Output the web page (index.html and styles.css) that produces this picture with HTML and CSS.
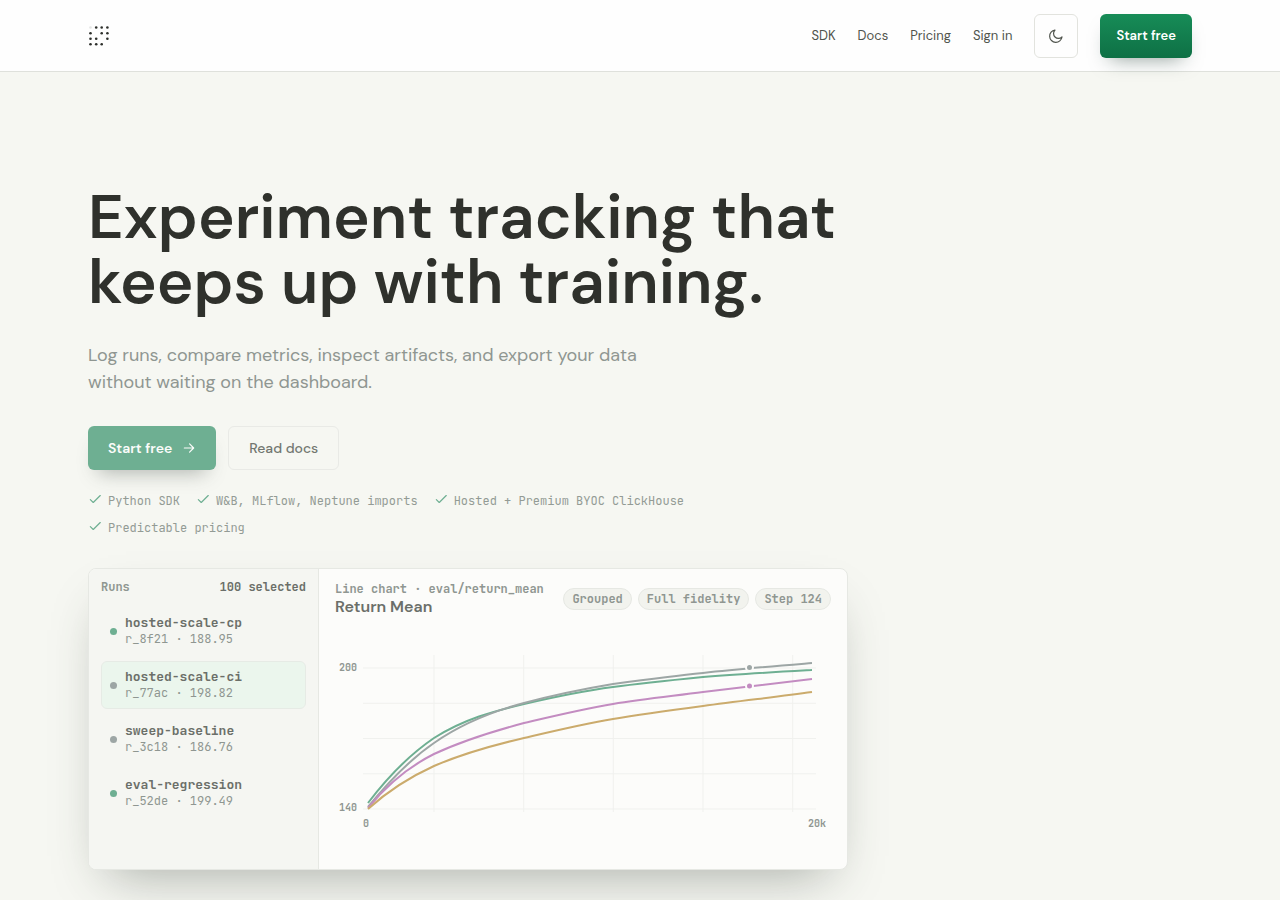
FILE: index.html
```html
<!DOCTYPE html>
<html lang="en">
<head>
  <meta charset="UTF-8" />
  <meta name="viewport" content="width=device-width, initial-scale=1" />
  <title>Experiment tracking that keeps up with training</title>
  <link rel="stylesheet" href="styles.css">
</head>
<body>
  <header class="site-header">
    <div class="container header-inner">
      <a class="logo" href="#" aria-label="Home">
        <svg width="22" height="22" viewBox="0 0 22 22" fill="#2d2f2b">
          <circle cx="2.5" cy="2.5" r="1.3" opacity="0.12" />
          <circle cx="8.2" cy="2.5" r="1.3" /><circle cx="13.7" cy="2.5" r="1.3" /><circle cx="19.4" cy="2.5" r="1.3" />
          <circle cx="2.5" cy="8.2" r="1.3" /><circle cx="13.7" cy="8.2" r="1.3" /><circle cx="19.4" cy="8.2" r="1.3" />
          <circle cx="2.5" cy="13.7" r="1.3" /><circle cx="8.2" cy="13.7" r="1.3" /><circle cx="19.4" cy="13.7" r="1.3" />
          <circle cx="2.5" cy="19.2" r="1.3" /><circle cx="8.2" cy="19.2" r="1.3" /><circle cx="13.7" cy="19.2" r="1.3" />
        </svg>
      </a>
      <nav class="nav" aria-label="Main">
        <a href="#">SDK</a>
        <a href="#">Docs</a>
        <a href="#">Pricing</a>
        <a href="#">Sign in</a>
        <button class="theme-toggle" type="button" aria-label="Toggle theme">
          <svg width="16" height="16" viewBox="0 0 24 24" fill="none" stroke="currentColor" stroke-width="1.8" stroke-linecap="round" stroke-linejoin="round"><path d="M10.5 3a7 7 0 0 0 10.5 10.5A9.3 9.3 0 1 1 10.5 3Z" /></svg>
        </button>
        <a class="btn btn-nav" href="#">Start free</a>
      </nav>
    </div>
  </header>

  <main class="container">
    <section class="hero">
      <h1>Experiment tracking that keeps up with training.</h1>
      <p class="lead">Log runs, compare metrics, inspect artifacts, and export your data without waiting on the dashboard.</p>

      <div class="actions">
        <a class="btn btn-primary" href="#">Start free
          <svg width="14" height="14" viewBox="0 0 24 24" fill="none" stroke="currentColor" stroke-width="2" stroke-linecap="round" stroke-linejoin="round"><path d="M4 12h16M13 5l7 7-7 7" /></svg>
        </a>
        <a class="btn btn-outline" href="#">Read docs</a>
      </div>

      <ul class="features">
        <li><svg viewBox="0 0 24 24"><path d="M21 6 9 18l-5-5" /></svg>Python SDK</li>
        <li><svg viewBox="0 0 24 24"><path d="M21 6 9 18l-5-5" /></svg>W&amp;B, MLflow, Neptune imports</li>
        <li><svg viewBox="0 0 24 24"><path d="M21 6 9 18l-5-5" /></svg>Hosted + Premium BYOC ClickHouse</li>
        <li><svg viewBox="0 0 24 24"><path d="M21 6 9 18l-5-5" /></svg>Predictable pricing</li>
      </ul>

      <div class="preview">
        <aside class="runs">
          <div class="runs-head"><span>Runs</span><strong>100 selected</strong></div>
          <ul class="run-list">
            <li class="run"><span class="dot dot-green"></span><div><b>hosted-scale-cp</b><small>r_8f21 · 188.95</small></div></li>
            <li class="run active"><span class="dot"></span><div><b>hosted-scale-ci</b><small>r_77ac · 198.82</small></div></li>
            <li class="run"><span class="dot"></span><div><b>sweep-baseline</b><small>r_3c18 · 186.76</small></div></li>
            <li class="run"><span class="dot dot-green"></span><div><b>eval-regression</b><small>r_52de · 199.49</small></div></li>
          </ul>
        </aside>

        <div class="panel">
          <div class="panel-head">
            <div>
              <p class="panel-kicker">Line chart · eval/return_mean</p>
              <h2>Return Mean</h2>
            </div>
            <div class="tags">
              <span>Grouped</span>
              <span>Full fidelity</span>
              <span>Step 124</span>
            </div>
          </div>
          <svg class="chart" viewBox="0 0 496 200" role="img" aria-label="Return mean by step">
            <path class="grid" d="M28 28H481M28 63.3H481M28 98.5H481M28 133.8H481M28 169H481M99 15V172M188.7 15V172M278.3 15V172M368 15V172M457.7 15V172" />
            <!-- series -->
            <path class="line green" d="M33 163C55 134 77 113 99 98C129 79 159 71 189 64C219 57 248 51 278 47C308 43 338 40 368 37C404 34 441 32 477 30" />
            <path class="line gray" d="M33 167C55 140 77 118 99 103C129 82 159 71 189 63C219 55 248 49 278 44C308 40 338 36 368 33C404 29 441 26 477 23" />
            <path class="line pink" d="M33 168C55 141 77 125 99 114C129 100 159 91 189 83C219 76 248 69 278 64C308 59 338 56 368 52C404 48 441 43 477 39" />
            <path class="line orange" d="M33 169C55 149 77 136 99 126C129 113 159 105 189 98C219 91 248 84 278 79C308 74 338 70 368 66C404 61 441 57 477 52" />
            <circle class="point" cx="414.5" cy="27.5" r="3.5" fill="#9da6a5" />
            <circle class="point" cx="414.5" cy="46" r="3.5" fill="#c38cc1" />
            <text x="4" y="31">200</text>
            <text x="4" y="171">140</text>
            <text x="28" y="187">0</text>
            <text x="473" y="187">20k</text>
          </svg>
        </div>
      </div>
    </section>
  </main>
</body>
</html>
```
FILE: styles.css
```css
* {
  box-sizing: border-box;
}

body {
  margin: 0;
  background: #f6f7f2;
  color: #2f312c;
  font-family: "DM Sans", Inter, sans-serif;
}

h1, h2, p, ul {
  margin: 0;
  padding: 0;
}

ul {
  list-style: none;
}

a {
  color: inherit;
  text-decoration: none;
}

svg {
  display: block;
}

.container {
  max-width: 1152px;
  margin: 0 auto;
  padding: 0 24px;
}

/* Header */
.site-header {
  background: #fefefe;
  border-bottom: 1px solid #dfe1dc;
}

.header-inner {
  display: flex;
  align-items: center;
  justify-content: space-between;
  height: 71px;
}

.nav {
  display: flex;
  align-items: center;
  gap: 22px;
  font-size: 13px;
  color: #50544d;
}

.theme-toggle {
  display: grid;
  place-items: center;
  width: 44px;
  height: 44px;
  padding: 0;
  border: 1px solid #e2e3de;
  border-radius: 6px;
  background: #fefefe;
  color: #50544d;
  cursor: pointer;
}

.btn {
  display: inline-flex;
  align-items: center;
  justify-content: center;
  gap: 10px;
  height: 44px;
  padding: 0 20px;
  border-radius: 6px;
  font-size: 14px;
  font-weight: 600;
}

.btn-nav {
  padding: 0 16px;
  font-size: 13px;
  color: #fff;
  background: linear-gradient(#178c57, #0e7045);
  box-shadow: 0 10px 20px -10px rgba(20, 50, 40, 0.5);
}

/* Hero */
.hero {
  max-width: 760px;
  padding: 112px 0 64px;
}

h1 {
  font-size: 62px;
  line-height: 65px;
  font-weight: 600;
}

.lead {
  max-width: 580px;
  margin-top: 28px;
  font-size: 18px;
  line-height: 27px;
  color: #8f9691;
}

.actions {
  display: flex;
  gap: 12px;
  margin-top: 30px;
}

.btn-primary {
  color: #fbfcfa;
  background: #6eaf92;
  box-shadow: 0 12px 20px -10px rgba(60, 70, 65, 0.4);
}

.btn-outline {
  border: 1px solid #e9eae6;
  font-weight: 500;
  color: #737771;
}

.features {
  display: flex;
  flex-wrap: wrap;
  gap: 9px 16px;
  margin-top: 22px;
  font-family: "JetBrains Mono", "Liberation Mono", monospace;
  font-size: 12px;
  line-height: 18px;
  color: #939b95;
}

.features li {
  display: flex;
  gap: 6px;
}

.features svg {
  width: 14px;
  height: 14px;
  fill: none;
  stroke: #6eaf92;
  stroke-width: 2;
  stroke-linecap: round;
  stroke-linejoin: round;
}

/* Product preview */
.preview {
  display: grid;
  grid-template-columns: 230px 1fr;
  min-height: 302px;
  margin-top: 31px;
  border: 1px solid #e6e8e3;
  border-radius: 8px;
  overflow: hidden;
  background: #fcfcfa;
  box-shadow: 0 24px 50px -20px rgba(50, 60, 50, 0.4);
  font-family: "JetBrains Mono", "Liberation Mono", monospace;
  font-size: 12px;
  line-height: 16px;
  color: #8f9691;
}

.runs {
  padding: 10px 12px;
  border-right: 1px solid #e6e8e3;
  background: #f5f6f2;
}

.runs-head {
  display: flex;
  justify-content: space-between;
  font-weight: 700;
}

.runs-head strong,
.run b {
  color: #6b6f69;
}

.runs-head strong {
  font-weight: 700;
}

.run-list {
  display: grid;
  gap: 6px;
  margin-top: 12px;
}

.run {
  display: flex;
  align-items: center;
  gap: 8px;
  height: 48px;
  padding: 0 8px;
  border: 1px solid transparent;
  border-radius: 6px;
}

.run.active {
  border-color: #e6ebe5;
  background: #ebf6ed;
}

.run b,
.run small {
  display: block;
}

.run b {
  font-size: 13px;
}

.run small {
  font-size: 12px;
}

.dot {
  width: 7px;
  height: 7px;
  border-radius: 50%;
  background: #9da6a5;
}

.dot-green {
  background: #6eaf92;
}

.panel {
  padding: 12px 16px;
}

.panel-head {
  display: flex;
  align-items: center;
  justify-content: space-between;
  gap: 12px;
}

.panel-kicker {
  font-weight: 700;
}

.panel h2 {
  font-family: "DM Sans", Inter, sans-serif;
  font-size: 16px;
  line-height: 20px;
  font-weight: 600;
  color: #6b6f69;
}

.tags {
  display: flex;
  gap: 6px;
}

.tags span {
  padding: 2px 8px;
  border: 1px solid #e6e8e3;
  border-radius: 999px;
  background: #f2f3ee;
  font-weight: 700;
  white-space: nowrap;
}

.chart {
  width: 100%;
  margin-top: 23px;
}

.chart .grid {
  stroke: #f0f1ee;
}

.chart .line {
  fill: none;
  stroke-width: 2;
}

.green {
  stroke: #6eaf92;
}

.gray {
  stroke: #9da6a5;
}

.pink {
  stroke: #c38cc1;
}

.orange {
  stroke: #cbab6c;
}

.chart .point {
  stroke: #fcfcfa;
  stroke-width: 2;
}

.chart text {
  font-size: 10px;
  font-weight: 700;
  fill: #8f9691;
}

@media (max-width: 700px) {
  h1 {
    font-size: 40px;
    line-height: 44px;
  }
  .preview {
    grid-template-columns: 1fr;
  }
  .panel-head {
    flex-wrap: wrap;
  }
}
```
